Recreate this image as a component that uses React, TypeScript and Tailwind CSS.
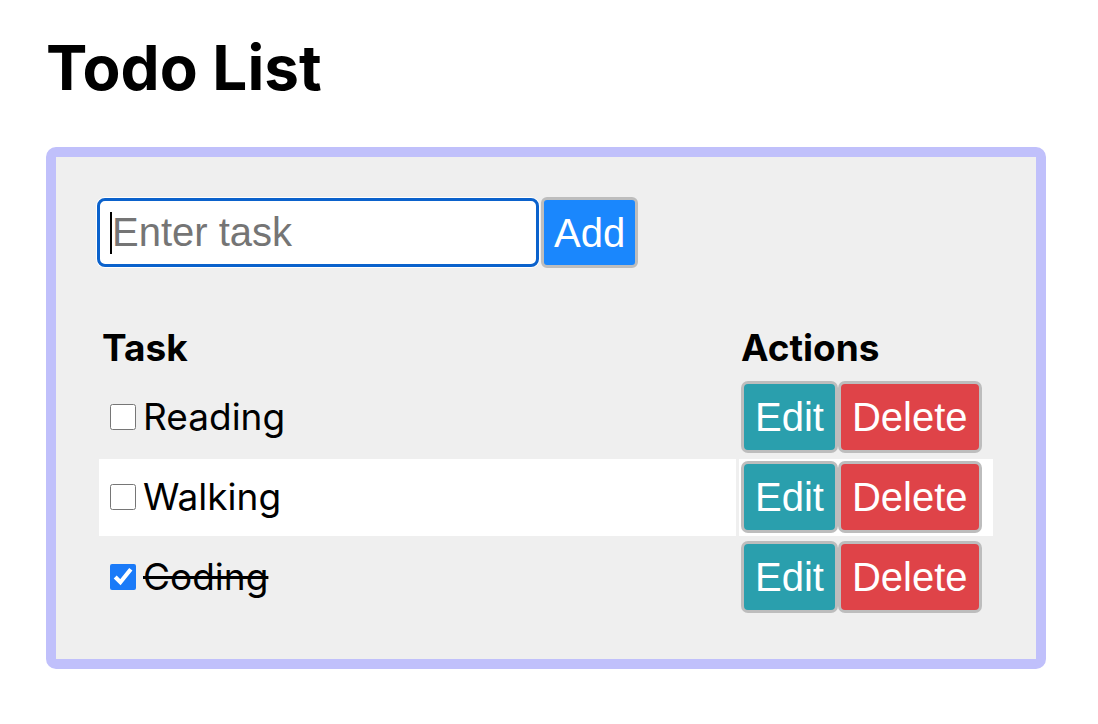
import { useState } from 'react';

interface Todo {
  id: number;
  text: string;
  done: boolean;
}

const initialTodos: Todo[] = [
  { id: 1, text: 'Reading', done: false },
  { id: 2, text: 'Walking', done: false },
  { id: 3, text: 'Coding', done: true },
];

export default function App() {
  const [todos, setTodos] = useState<Todo[]>(initialTodos);
  const [task, setTask] = useState('');

  const toggle = (id: number) =>
    setTodos(todos.map(t => (t.id === id ? { ...t, done: !t.done } : t)));

  const remove = (id: number) => setTodos(todos.filter(t => t.id !== id));

  const add = () => {
    if (!task.trim()) return;
    setTodos([...todos, { id: Date.now(), text: task.trim(), done: false }]);
    setTask('');
  };

  return (
    <div className="min-h-screen bg-white px-[46px] pt-[21px] font-['Inter',sans-serif] text-black">
      <h1 className="text-[62px] font-bold leading-normal">Todo List</h1>

      <div className="mt-[33px] w-[1000px] rounded-[10px] border-[10px] border-[#c0c0fb] bg-[#efefef] p-[40px]">
        {/* Add form */}
        <div className="flex items-center">
          <div className="relative rounded-[9px] bg-white p-px">
            <input
              value={task}
              onChange={e => setTask(e.target.value)}
              placeholder="Enter task"
              className="block h-[69px] w-[442px] rounded-[8px] border-[3px] border-[#0b62cc] bg-white px-[12px] font-['Liberation_Sans',Arial,sans-serif] text-[40px] text-black outline-none placeholder:text-[#757575]"
            />
            {/* caret */}
            <span className="absolute left-[14px] top-[15px] h-[42px] w-[2px] bg-black" />
          </div>
          <button
            onClick={add}
            className="ml-px h-[71px] rounded-[6px] border-[3px] border-[#bdbdbd] bg-[#1a87fd] px-[10px] font-['Liberation_Sans',Arial,sans-serif] text-[40px] leading-none text-white"
          >
            Add
          </button>
        </div>

        {/* Task table */}
        <table className="mt-[49px] w-full border-separate border-spacing-[3px] text-[37px]">
          <thead>
            <tr>
              <th className="h-[48px] px-[3px] text-left font-bold">Task</th>
              <th className="h-[48px] w-[254px] px-[2px] text-left font-bold">Actions</th>
            </tr>
          </thead>
          <tbody>
            {todos.map((todo, i) => (
              <tr key={todo.id} className={i % 2 === 1 ? 'bg-white' : ''}>
                <td className="h-[77px] px-[3px] align-middle">
                  <label className="flex items-center">
                    <input
                      type="checkbox"
                      checked={todo.done}
                      onChange={() => toggle(todo.id)}
                      className="ml-[8px] mr-[7px] h-[26px] w-[26px] accent-[#1a7af8]"
                    />
                    <span className={todo.done ? 'line-through' : ''}>{todo.text}</span>
                  </label>
                </td>
                <td className="h-[77px] px-[2px] align-middle">
                  <div className="flex font-['Liberation_Sans',Arial,sans-serif] text-[40px] leading-none text-white">
                    <button className="h-[72px] rounded-[7px] border-[3px] border-[#bdbdbd] bg-[#2a9fad] px-[11px]">
                      Edit
                    </button>
                    <button
                      onClick={() => remove(todo.id)}
                      className="h-[72px] rounded-[7px] border-[3px] border-[#bdbdbd] bg-[#df4348] px-[11px]"
                    >
                      Delete
                    </button>
                  </div>
                </td>
              </tr>
            ))}
          </tbody>
        </table>
      </div>
    </div>
  );
}
